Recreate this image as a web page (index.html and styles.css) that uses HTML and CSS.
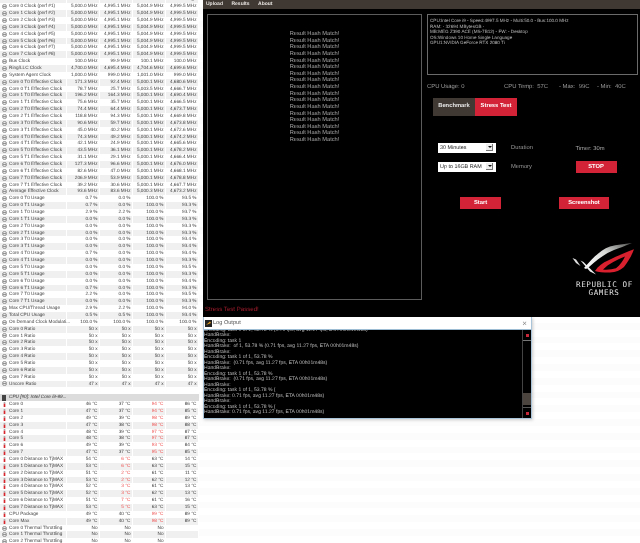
FILE: index.html
```html
<!DOCTYPE html>
<html lang="en">
<head>
<meta charset="utf-8">
<title>Stress Test</title>
<link rel="stylesheet" href="styles.css">
</head>
<body>
<svg class="defs" width="0" height="0" aria-hidden="true">
<symbol id="g" viewBox="0 0 6 6"><circle cx="3" cy="3" r="2.5" fill="#e8e8e8" stroke="#6e6e6e" stroke-width=".8"/><path d="M1.2 3h3.6" stroke="#777" stroke-width=".9"/></symbol>
<symbol id="t" viewBox="0 0 6 6"><rect x="2" y="0" width="2" height="2" fill="#aaa"/><rect x="2" y="2" width="2" height="4" fill="#d8262f"/></symbol>
<linearGradient id="wing" x1="0" y1="1" x2="1" y2="0"><stop offset="0" stop-color="#fff"/><stop offset=".55" stop-color="#d8dad8"/><stop offset="1" stop-color="#4d4f4d"/></linearGradient>
</svg>
<div class="desktop">
<section class="sensors">
<div class="r"><span class="nm">Sensor</span><span>Current</span><span>Minimum</span><span>Maximum</span><span>Average</span></div>
<div class="r"><span class="nm"><svg class="ic"><use href="#g"/></svg>Core 0 Clock (perf #1)</span><span>5,000.0 MHz</span><span>4,995.1 MHz</span><span>5,004.9 MHz</span><span>4,999.5 MHz</span></div>
<div class="r"><span class="nm"><svg class="ic"><use href="#g"/></svg>Core 1 Clock (perf #2)</span><span>5,000.0 MHz</span><span>4,995.1 MHz</span><span>5,004.9 MHz</span><span>4,999.5 MHz</span></div>
<div class="r"><span class="nm"><svg class="ic"><use href="#g"/></svg>Core 2 Clock (perf #3)</span><span>5,000.0 MHz</span><span>4,995.1 MHz</span><span>5,004.9 MHz</span><span>4,999.5 MHz</span></div>
<div class="r"><span class="nm"><svg class="ic"><use href="#g"/></svg>Core 3 Clock (perf #4)</span><span>5,000.0 MHz</span><span>4,995.1 MHz</span><span>5,004.9 MHz</span><span>4,999.5 MHz</span></div>
<div class="r"><span class="nm"><svg class="ic"><use href="#g"/></svg>Core 4 Clock (perf #5)</span><span>5,000.0 MHz</span><span>4,995.1 MHz</span><span>5,004.9 MHz</span><span>4,999.5 MHz</span></div>
<div class="r"><span class="nm"><svg class="ic"><use href="#g"/></svg>Core 5 Clock (perf #6)</span><span>5,000.0 MHz</span><span>4,995.1 MHz</span><span>5,004.9 MHz</span><span>4,999.5 MHz</span></div>
<div class="r"><span class="nm"><svg class="ic"><use href="#g"/></svg>Core 6 Clock (perf #7)</span><span>5,000.0 MHz</span><span>4,995.1 MHz</span><span>5,004.9 MHz</span><span>4,999.5 MHz</span></div>
<div class="r"><span class="nm"><svg class="ic"><use href="#g"/></svg>Core 7 Clock (perf #8)</span><span>5,000.0 MHz</span><span>4,995.1 MHz</span><span>5,004.9 MHz</span><span>4,999.5 MHz</span></div>
<div class="r"><span class="nm"><svg class="ic"><use href="#g"/></svg>Bus Clock</span><span>100.0 MHz</span><span>99.9 MHz</span><span>100.1 MHz</span><span>100.0 MHz</span></div>
<div class="r"><span class="nm"><svg class="ic"><use href="#g"/></svg>Ring/LLC Clock</span><span>4,700.0 MHz</span><span>4,695.4 MHz</span><span>4,704.6 MHz</span><span>4,699.6 MHz</span></div>
<div class="r"><span class="nm"><svg class="ic"><use href="#g"/></svg>System Agent Clock</span><span>1,000.0 MHz</span><span>999.0 MHz</span><span>1,001.0 MHz</span><span>999.0 MHz</span></div>
<div class="r"><span class="nm"><svg class="ic"><use href="#g"/></svg>Core 0 T0 Effective Clock</span><span>171.3 MHz</span><span>92.4 MHz</span><span>5,000.1 MHz</span><span>4,680.6 MHz</span></div>
<div class="r"><span class="nm"><svg class="ic"><use href="#g"/></svg>Core 0 T1 Effective Clock</span><span>78.7 MHz</span><span>25.7 MHz</span><span>5,003.5 MHz</span><span>4,666.7 MHz</span></div>
<div class="r"><span class="nm"><svg class="ic"><use href="#g"/></svg>Core 1 T0 Effective Clock</span><span>196.2 MHz</span><span>164.3 MHz</span><span>5,000.1 MHz</span><span>4,690.4 MHz</span></div>
<div class="r"><span class="nm"><svg class="ic"><use href="#g"/></svg>Core 1 T1 Effective Clock</span><span>75.6 MHz</span><span>35.7 MHz</span><span>5,000.1 MHz</span><span>4,666.5 MHz</span></div>
<div class="r"><span class="nm"><svg class="ic"><use href="#g"/></svg>Core 2 T0 Effective Clock</span><span>74.4 MHz</span><span>64.4 MHz</span><span>5,000.1 MHz</span><span>4,673.7 MHz</span></div>
<div class="r"><span class="nm"><svg class="ic"><use href="#g"/></svg>Core 2 T1 Effective Clock</span><span>118.8 MHz</span><span>94.3 MHz</span><span>5,000.1 MHz</span><span>4,669.8 MHz</span></div>
<div class="r"><span class="nm"><svg class="ic"><use href="#g"/></svg>Core 3 T0 Effective Clock</span><span>90.6 MHz</span><span>59.7 MHz</span><span>5,000.1 MHz</span><span>4,673.8 MHz</span></div>
<div class="r"><span class="nm"><svg class="ic"><use href="#g"/></svg>Core 3 T1 Effective Clock</span><span>45.0 MHz</span><span>40.2 MHz</span><span>5,000.1 MHz</span><span>4,672.6 MHz</span></div>
<div class="r"><span class="nm"><svg class="ic"><use href="#g"/></svg>Core 4 T0 Effective Clock</span><span>74.3 MHz</span><span>49.2 MHz</span><span>5,000.1 MHz</span><span>4,674.2 MHz</span></div>
<div class="r"><span class="nm"><svg class="ic"><use href="#g"/></svg>Core 4 T1 Effective Clock</span><span>42.1 MHz</span><span>24.9 MHz</span><span>5,000.1 MHz</span><span>4,665.6 MHz</span></div>
<div class="r"><span class="nm"><svg class="ic"><use href="#g"/></svg>Core 5 T0 Effective Clock</span><span>43.5 MHz</span><span>36.1 MHz</span><span>5,000.1 MHz</span><span>4,678.2 MHz</span></div>
<div class="r"><span class="nm"><svg class="ic"><use href="#g"/></svg>Core 5 T1 Effective Clock</span><span>31.1 MHz</span><span>29.1 MHz</span><span>5,000.1 MHz</span><span>4,666.4 MHz</span></div>
<div class="r"><span class="nm"><svg class="ic"><use href="#g"/></svg>Core 6 T0 Effective Clock</span><span>127.3 MHz</span><span>96.6 MHz</span><span>5,000.1 MHz</span><span>4,676.0 MHz</span></div>
<div class="r"><span class="nm"><svg class="ic"><use href="#g"/></svg>Core 6 T1 Effective Clock</span><span>82.6 MHz</span><span>47.0 MHz</span><span>5,000.1 MHz</span><span>4,668.1 MHz</span></div>
<div class="r"><span class="nm"><svg class="ic"><use href="#g"/></svg>Core 7 T0 Effective Clock</span><span>206.9 MHz</span><span>53.9 MHz</span><span>5,000.1 MHz</span><span>4,678.8 MHz</span></div>
<div class="r"><span class="nm"><svg class="ic"><use href="#g"/></svg>Core 7 T1 Effective Clock</span><span>39.2 MHz</span><span>30.6 MHz</span><span>5,000.1 MHz</span><span>4,667.7 MHz</span></div>
<div class="r"><span class="nm"><svg class="ic"><use href="#g"/></svg>Average Effective Clock</span><span>93.6 MHz</span><span>83.6 MHz</span><span>5,000.3 MHz</span><span>4,673.2 MHz</span></div>
<div class="r"><span class="nm"><svg class="ic"><use href="#g"/></svg>Core 0 T0 Usage</span><span>0.7 %</span><span>0.0 %</span><span>100.0 %</span><span>93.5 %</span></div>
<div class="r"><span class="nm"><svg class="ic"><use href="#g"/></svg>Core 0 T1 Usage</span><span>0.7 %</span><span>0.0 %</span><span>100.0 %</span><span>93.3 %</span></div>
<div class="r"><span class="nm"><svg class="ic"><use href="#g"/></svg>Core 1 T0 Usage</span><span>2.9 %</span><span>2.2 %</span><span>100.0 %</span><span>93.7 %</span></div>
<div class="r"><span class="nm"><svg class="ic"><use href="#g"/></svg>Core 1 T1 Usage</span><span>0.0 %</span><span>0.0 %</span><span>100.0 %</span><span>93.3 %</span></div>
<div class="r"><span class="nm"><svg class="ic"><use href="#g"/></svg>Core 2 T0 Usage</span><span>0.0 %</span><span>0.0 %</span><span>100.0 %</span><span>93.3 %</span></div>
<div class="r"><span class="nm"><svg class="ic"><use href="#g"/></svg>Core 2 T1 Usage</span><span>0.0 %</span><span>0.0 %</span><span>100.0 %</span><span>93.3 %</span></div>
<div class="r"><span class="nm"><svg class="ic"><use href="#g"/></svg>Core 3 T0 Usage</span><span>0.0 %</span><span>0.0 %</span><span>100.0 %</span><span>93.4 %</span></div>
<div class="r"><span class="nm"><svg class="ic"><use href="#g"/></svg>Core 3 T1 Usage</span><span>0.0 %</span><span>0.0 %</span><span>100.0 %</span><span>93.4 %</span></div>
<div class="r"><span class="nm"><svg class="ic"><use href="#g"/></svg>Core 4 T0 Usage</span><span>0.7 %</span><span>0.0 %</span><span>100.0 %</span><span>93.4 %</span></div>
<div class="r"><span class="nm"><svg class="ic"><use href="#g"/></svg>Core 4 T1 Usage</span><span>0.0 %</span><span>0.0 %</span><span>100.0 %</span><span>93.3 %</span></div>
<div class="r"><span class="nm"><svg class="ic"><use href="#g"/></svg>Core 5 T0 Usage</span><span>0.0 %</span><span>0.0 %</span><span>100.0 %</span><span>93.5 %</span></div>
<div class="r"><span class="nm"><svg class="ic"><use href="#g"/></svg>Core 5 T1 Usage</span><span>0.0 %</span><span>0.0 %</span><span>100.0 %</span><span>93.3 %</span></div>
<div class="r"><span class="nm"><svg class="ic"><use href="#g"/></svg>Core 6 T0 Usage</span><span>0.0 %</span><span>0.0 %</span><span>100.0 %</span><span>93.4 %</span></div>
<div class="r"><span class="nm"><svg class="ic"><use href="#g"/></svg>Core 6 T1 Usage</span><span>0.7 %</span><span>0.0 %</span><span>100.0 %</span><span>93.3 %</span></div>
<div class="r"><span class="nm"><svg class="ic"><use href="#g"/></svg>Core 7 T0 Usage</span><span>2.2 %</span><span>0.0 %</span><span>100.0 %</span><span>93.5 %</span></div>
<div class="r"><span class="nm"><svg class="ic"><use href="#g"/></svg>Core 7 T1 Usage</span><span>0.0 %</span><span>0.0 %</span><span>100.0 %</span><span>93.3 %</span></div>
<div class="r"><span class="nm"><svg class="ic"><use href="#g"/></svg>Max CPU/Thread Usage</span><span>2.9 %</span><span>2.2 %</span><span>100.0 %</span><span>94.0 %</span></div>
<div class="r"><span class="nm"><svg class="ic"><use href="#g"/></svg>Total CPU Usage</span><span>0.5 %</span><span>0.5 %</span><span>100.0 %</span><span>93.4 %</span></div>
<div class="r"><span class="nm"><svg class="ic"><use href="#g"/></svg>On Demand Clock Modulati...</span><span>100.0 %</span><span>100.0 %</span><span>100.0 %</span><span>100.0 %</span></div>
<div class="r"><span class="nm"><svg class="ic"><use href="#g"/></svg>Core 0 Ratio</span><span>50 x</span><span>50 x</span><span>50 x</span><span>50 x</span></div>
<div class="r"><span class="nm"><svg class="ic"><use href="#g"/></svg>Core 1 Ratio</span><span>50 x</span><span>50 x</span><span>50 x</span><span>50 x</span></div>
<div class="r"><span class="nm"><svg class="ic"><use href="#g"/></svg>Core 2 Ratio</span><span>50 x</span><span>50 x</span><span>50 x</span><span>50 x</span></div>
<div class="r"><span class="nm"><svg class="ic"><use href="#g"/></svg>Core 3 Ratio</span><span>50 x</span><span>50 x</span><span>50 x</span><span>50 x</span></div>
<div class="r"><span class="nm"><svg class="ic"><use href="#g"/></svg>Core 4 Ratio</span><span>50 x</span><span>50 x</span><span>50 x</span><span>50 x</span></div>
<div class="r"><span class="nm"><svg class="ic"><use href="#g"/></svg>Core 5 Ratio</span><span>50 x</span><span>50 x</span><span>50 x</span><span>50 x</span></div>
<div class="r"><span class="nm"><svg class="ic"><use href="#g"/></svg>Core 6 Ratio</span><span>50 x</span><span>50 x</span><span>50 x</span><span>50 x</span></div>
<div class="r"><span class="nm"><svg class="ic"><use href="#g"/></svg>Core 7 Ratio</span><span>50 x</span><span>50 x</span><span>50 x</span><span>50 x</span></div>
<div class="r"><span class="nm"><svg class="ic"><use href="#g"/></svg>Uncore Ratio</span><span>47 x</span><span>47 x</span><span>47 x</span><span>47 x</span></div>
<div class="r"></div>
<div class="r group"><span class="nm"><svg class="ic"><rect x="0" y="0" width="4" height="6" fill="#444"/></svg>CPU [#0]: Intel Core i9-99...</span></div>
<div class="r"><span class="nm"><svg class="ic"><use href="#t"/></svg>Core 0</span><span>46 °C</span><span>37 °C</span><span class="hot">94 °C</span><span>86 °C</span></div>
<div class="r"><span class="nm"><svg class="ic"><use href="#t"/></svg>Core 1</span><span>47 °C</span><span>37 °C</span><span class="hot">94 °C</span><span>85 °C</span></div>
<div class="r"><span class="nm"><svg class="ic"><use href="#t"/></svg>Core 2</span><span>49 °C</span><span>39 °C</span><span class="hot">98 °C</span><span>89 °C</span></div>
<div class="r"><span class="nm"><svg class="ic"><use href="#t"/></svg>Core 3</span><span>47 °C</span><span>38 °C</span><span class="hot">98 °C</span><span>88 °C</span></div>
<div class="r"><span class="nm"><svg class="ic"><use href="#t"/></svg>Core 4</span><span>48 °C</span><span>39 °C</span><span class="hot">97 °C</span><span>87 °C</span></div>
<div class="r"><span class="nm"><svg class="ic"><use href="#t"/></svg>Core 5</span><span>48 °C</span><span>38 °C</span><span class="hot">97 °C</span><span>87 °C</span></div>
<div class="r"><span class="nm"><svg class="ic"><use href="#t"/></svg>Core 6</span><span>49 °C</span><span>39 °C</span><span class="hot">93 °C</span><span>84 °C</span></div>
<div class="r"><span class="nm"><svg class="ic"><use href="#t"/></svg>Core 7</span><span>47 °C</span><span>37 °C</span><span class="hot">95 °C</span><span>85 °C</span></div>
<div class="r"><span class="nm"><svg class="ic"><use href="#t"/></svg>Core 0 Distance to TjMAX</span><span>54 °C</span><span class="hot">6 °C</span><span>63 °C</span><span>14 °C</span></div>
<div class="r"><span class="nm"><svg class="ic"><use href="#t"/></svg>Core 1 Distance to TjMAX</span><span>53 °C</span><span class="hot">6 °C</span><span>63 °C</span><span>15 °C</span></div>
<div class="r"><span class="nm"><svg class="ic"><use href="#t"/></svg>Core 2 Distance to TjMAX</span><span>51 °C</span><span class="hot">2 °C</span><span>61 °C</span><span>11 °C</span></div>
<div class="r"><span class="nm"><svg class="ic"><use href="#t"/></svg>Core 3 Distance to TjMAX</span><span>53 °C</span><span class="hot">2 °C</span><span>62 °C</span><span>12 °C</span></div>
<div class="r"><span class="nm"><svg class="ic"><use href="#t"/></svg>Core 4 Distance to TjMAX</span><span>52 °C</span><span class="hot">3 °C</span><span>61 °C</span><span>13 °C</span></div>
<div class="r"><span class="nm"><svg class="ic"><use href="#t"/></svg>Core 5 Distance to TjMAX</span><span>52 °C</span><span class="hot">3 °C</span><span>62 °C</span><span>13 °C</span></div>
<div class="r"><span class="nm"><svg class="ic"><use href="#t"/></svg>Core 6 Distance to TjMAX</span><span>51 °C</span><span class="hot">7 °C</span><span>61 °C</span><span>16 °C</span></div>
<div class="r"><span class="nm"><svg class="ic"><use href="#t"/></svg>Core 7 Distance to TjMAX</span><span>53 °C</span><span class="hot">5 °C</span><span>63 °C</span><span>15 °C</span></div>
<div class="r"><span class="nm"><svg class="ic"><use href="#t"/></svg>CPU Package</span><span>49 °C</span><span>40 °C</span><span class="hot">99 °C</span><span>89 °C</span></div>
<div class="r"><span class="nm"><svg class="ic"><use href="#t"/></svg>Core Max</span><span>49 °C</span><span>40 °C</span><span class="hot">98 °C</span><span>89 °C</span></div>
<div class="r"><span class="nm"><svg class="ic"><use href="#g"/></svg>Core 0 Thermal Throttling</span><span>No</span><span>No</span><span>No</span><span></span></div>
<div class="r"><span class="nm"><svg class="ic"><use href="#g"/></svg>Core 1 Thermal Throttling</span><span>No</span><span>No</span><span>No</span><span></span></div>
<div class="r"><span class="nm"><svg class="ic"><use href="#g"/></svg>Core 2 Thermal Throttling</span><span>No</span><span>No</span><span>No</span><span></span></div>
</section>

<main class="app">
<nav class="menu"><span>Upload</span><span>Results</span><span>About</span></nav>
<div class="panels">
<div class="left">
<div class="results">
<p>Result Hash Match!</p><p>Result Hash Match!</p><p>Result Hash Match!</p><p>Result Hash Match!</p><p>Result Hash Match!</p><p>Result Hash Match!</p><p>Result Hash Match!</p><p>Result Hash Match!</p><p>Result Hash Match!</p><p>Result Hash Match!</p><p>Result Hash Match!</p><p>Result Hash Match!</p><p>Result Hash Match!</p><p>Result Hash Match!</p><p>Result Hash Match!</p><p>Result Hash Match!</p><p>Result Hash Match!</p>
</div>
<div class="passed">Stress Test Passed!</div>
</div>
<div class="right">
<div class="info">
<p>CPU:Intel Core i9 - Speed:4997.5 MHz - Multi:50.0 - Bus:100.0 MHz</p>
<p>RAM: - 32694 MBytesGB -</p>
<p>MB:MEG Z390 ACE (MS-7B12) - FW: - Desktop</p>
<p>OS:Windows 10 Home Single Language</p>
<p>GPU1:NVIDIA GeForce RTX 2080 Ti</p>
</div>
<div class="stats"><span class="s1">CPU Usage: 0</span><span class="s2">CPU Temp:&nbsp; 57C</span><span class="s3">- Max:&nbsp; 99C</span><span class="s4">- Min:&nbsp; 40C</span></div>
<div class="tabs"><span class="tab">Benchmark</span><span class="tab active">Stress Test</span></div>
<div class="opts">
<div class="opt"><span class="sel">30 Minutes<i class="arrow"></i></span><span class="lab">Duration</span><span class="timer">Timer: 30m</span></div>
<div class="opt second"><span class="sel">Up to 16GB RAM<i class="arrow"></i></span><span class="lab">Memory</span><span class="btn stop">STOP</span></div>
</div>
<div class="actions"><span class="btn start">Start</span><span class="btn shot">Screenshot</span></div>
<div class="brand">
<svg class="rog" viewBox="0 0 68 40" aria-hidden="true">
<path d="M14 28 C22 19 30 10 40 6.500 C47 4.500 54 4 62 3 C55 6 49 8 44 10 C35 13.500 27 20 19 27 L16 29 Z" fill="url(#wing)"/>
<path d="M2.500 18 L6 19.500 L10.500 26 L6 23 Z" fill="#e0e0e0"/>
<path d="M10.500 20.500 L13.500 22 L26 34.500 L20 31.500 Z" fill="#f0f0f0"/>
<path fill-rule="evenodd" d="M25 31 C28 26 33 22.500 38 20.500 C45 17 55 12.500 64 9.300 C62 15 58 22 54 27 C50 30.500 46 32.300 40 32.600 C34 32.700 29 32.300 25 31 Z M33 29.500 C37 30 42 29.500 46 28.300 C50 25 53 21 55 16.500 C47 19.500 39 23.500 33 29.500 Z" fill="#d9202e"/>
</svg>
<div class="rogtext">REPUBLIC OF<br>GAMERS</div>
</div>
</div>
</div>
</main>

<section class="log">
<header class="logbar"><svg class="logicon" viewBox="0 0 7 7" aria-hidden="true"><rect width="7" height="7" fill="#222"/><path d="M1 5 L5 1.500 L6 3 Z" fill="#e8a020"/></svg><span>Log Output</span><span class="close">×</span></header>
<div class="logbody">
<div class="logtext">
<p>Encoding: task 1 of 1, 53.78 % (0.71 fps, avg 11.27 fps, ETA 00h01m48s)</p>
<p>HandBrake:</p>
<p>Encoding: task 1</p>
<p>HandBrake:&nbsp; of 1, 53.78 % (0.71 fps, avg 11.27 fps, ETA 00h01m48s)</p>
<p>HandBrake:</p>
<p>Encoding: task 1 of 1, 53.78 %</p>
<p>HandBrake:&nbsp; (0.71 fps, avg 11.27 fps, ETA 00h01m48s)</p>
<p>HandBrake:</p>
<p>Encoding: task 1 of 1, 53.78 %</p>
<p>HandBrake:&nbsp; (0.71 fps, avg 11.27 fps, ETA 00h01m48s)</p>
<p>HandBrake:</p>
<p>Encoding: task 1 of 1, 53.78 % (</p>
<p>HandBrake: 0.71 fps, avg 11.27 fps, ETA 00h01m48s)</p>
<p>HandBrake:</p>
<p>Encoding: task 1 of 1, 53.78 % (</p>
<p>HandBrake: 0.71 fps, avg 11.27 fps, ETA 00h01m48s)</p>
</div>
<div class="scroll"><span class="sbtn"><i></i></span><span class="strack"><b></b></span><span class="sbtn"><i></i></span></div>
</div>
</section>
</div>
</body>
</html>
```
FILE: styles.css
```css
* { box-sizing: border-box; }
html, body { margin: 0; padding: 0; background: #fff; }
body { width: 640px; height: 543px; overflow: hidden; font-family: "Liberation Sans", sans-serif; text-rendering: geometricPrecision; }
p { margin: 0; }
.defs { position: absolute; }
.desktop { position: relative; display: flex; width: 640px; height: 543px; overflow: hidden; filter: blur(0.25px); background: repeating-linear-gradient(#fff 0 6.87px, #fcfcfc 6.87px 13.74px); }

.sensors { flex: none; width: 203px; margin-top: -3.6px; padding-right: 4px; font-size: 4.7px; color: #3e3e3e; }
.r { display: grid; grid-template-columns: 67px 33px 33px 33px 33px; height: 6.87px; line-height: 6.87px; text-align: right; white-space: nowrap; }
.r:nth-child(even) { background: #fff; }
.r:nth-child(odd) { background: #f0f0f0; }
.r span { display: block; padding-right: 1.5px; border-right: 1px solid #fff; }
.r .nm { display: flex; align-items: center; text-align: left; padding-left: 2px; overflow: visible; }
.ic { flex: none; width: 5px; height: 5px; margin-right: 2px; overflow: visible; }
.hot { color: #f04c4c; }
.r.group { background: #dcdcdc; font-style: italic; display: block; }
.r.group .nm { color: #333; border: 0; }

.app { flex: none; width: 437px; height: 317px; background: #000; color: #aaa; }
.menu { display: flex; height: 8.5px; background: #3f3833; color: #e8e4e0; font-size: 5px; font-weight: 700; line-height: 8px; padding-left: 3px; gap: 8.5px; }
.panels { display: flex; padding: 5.5px 3px 0 4px; gap: 5px; }

.left { width: 215px; flex: none; }
.results { height: 286px; border: 1px solid #5c5c5c; padding-top: 16px; text-align: center; font-size: 5.7px; line-height: 6.62px; color: #a8a8a8; }
.passed { margin: 6px 0 0 -2px; font-size: 6.1px; line-height: 8px; color: #a51d2e; }

.right { flex: 1; font-size: 5.8px; }
.info { height: 61px; border: 1px solid #6a6a6a; padding: 3px 2px; font-size: 4.6px; line-height: 5.5px; color: #bbb; }
.stats { display: flex; margin-top: 8px; height: 8px; line-height: 8px; color: #9a9a9a; white-space: nowrap; font-size: 5.9px; }
.s1 { width: 77px; } .s2 { width: 55px; } .s3 { width: 38px; }

.tabs { display: flex; margin: 7px 0 0 6px; height: 17.5px; line-height: 17.5px; font-weight: 700; text-align: center; color: #e8e8e8; }
.tab { width: 42px; background: #3f3833; }
.tab.active { background: #d32437; color: #fff; }

.opts { margin: 27px 0 0 11px; color: #999; }
.opt { display: flex; align-items: center; height: 10px; }
.opt.second { margin-top: 8.5px; height: 11px; }
.sel { position: relative; display: block; flex: none; width: 58px; height: 10px; background: #fff; color: #222; font-size: 5.4px; line-height: 10px; padding-left: 2px; }
.arrow { position: absolute; right: 3px; top: 1.5px; width: 7px; height: 7px; background: #eee; border-bottom: 1px solid #777; border-right: 1px solid #777; }
.arrow::after { content: ""; position: absolute; left: 1.5px; top: 2px; border: 2px solid transparent; border-top: 2.5px solid #111; border-bottom: 0; }
.lab { width: 64.5px; margin-left: 15px; flex: none; }
.timer { margin-top: 3px; color: #aaa; }

.btn { display: block; background: #d32437; color: #fff; font-weight: 700; text-align: center; height: 12px; line-height: 12px; }
.stop { width: 41px; }
.actions { display: flex; margin: 25px 0 0 33px; }
.start { width: 41px; }
.shot { width: 50px; margin-left: 58px; }

.brand { margin: 30.5px 0 0 143px; width: 68px; }
.rog { display: block; width: 68px; height: 40px; }
.rogtext { margin-top: 1px; padding-left: 6px; width: 62px; text-align: center; font-family: "DejaVu Sans Mono", monospace; font-size: 7.6px; line-height: 8px; letter-spacing: .6px; color: #e2e2e2; white-space: nowrap; }

.log { position: absolute; left: 203px; top: 317px; width: 329px; height: 102px; background: #fff; border: 1px solid #a9c4d8; border-top: 0; box-shadow: 1px 1px 3px rgba(0,0,0,.2); }
.logbar { display: flex; align-items: center; height: 13px; font-size: 5.6px; color: #555; padding-left: 1px; border-bottom: 1px solid #9dbdd4; }
.logicon { width: 7px; height: 7px; margin-right: 1px; }
.close { margin-left: auto; margin-right: 4px; font-size: 8px; color: #888; }
.logbody { display: flex; height: 88px; background: #000; overflow: hidden; }
.logtext { flex: 1; margin-top: -2px; font-size: 5.05px; line-height: 5.47px; color: #bdbdbd; white-space: nowrap; overflow: hidden; }
.scroll { flex: none; width: 9px; display: flex; flex-direction: column; border-left: 1px solid #444; }
.sbtn { flex: none; height: 11px; display: flex; align-items: center; justify-content: center; border-bottom: 1px solid #777; }
.sbtn:last-child { border-bottom: 0; border-top: 1px solid #555; }
.sbtn i { display: block; width: 3px; height: 3px; background: #c8283a; }
.strack { flex: 1; display: flex; flex-direction: column; justify-content: flex-end; padding-bottom: 2px; }
.strack b { display: block; height: 12px; background: #4b443e; }
```
